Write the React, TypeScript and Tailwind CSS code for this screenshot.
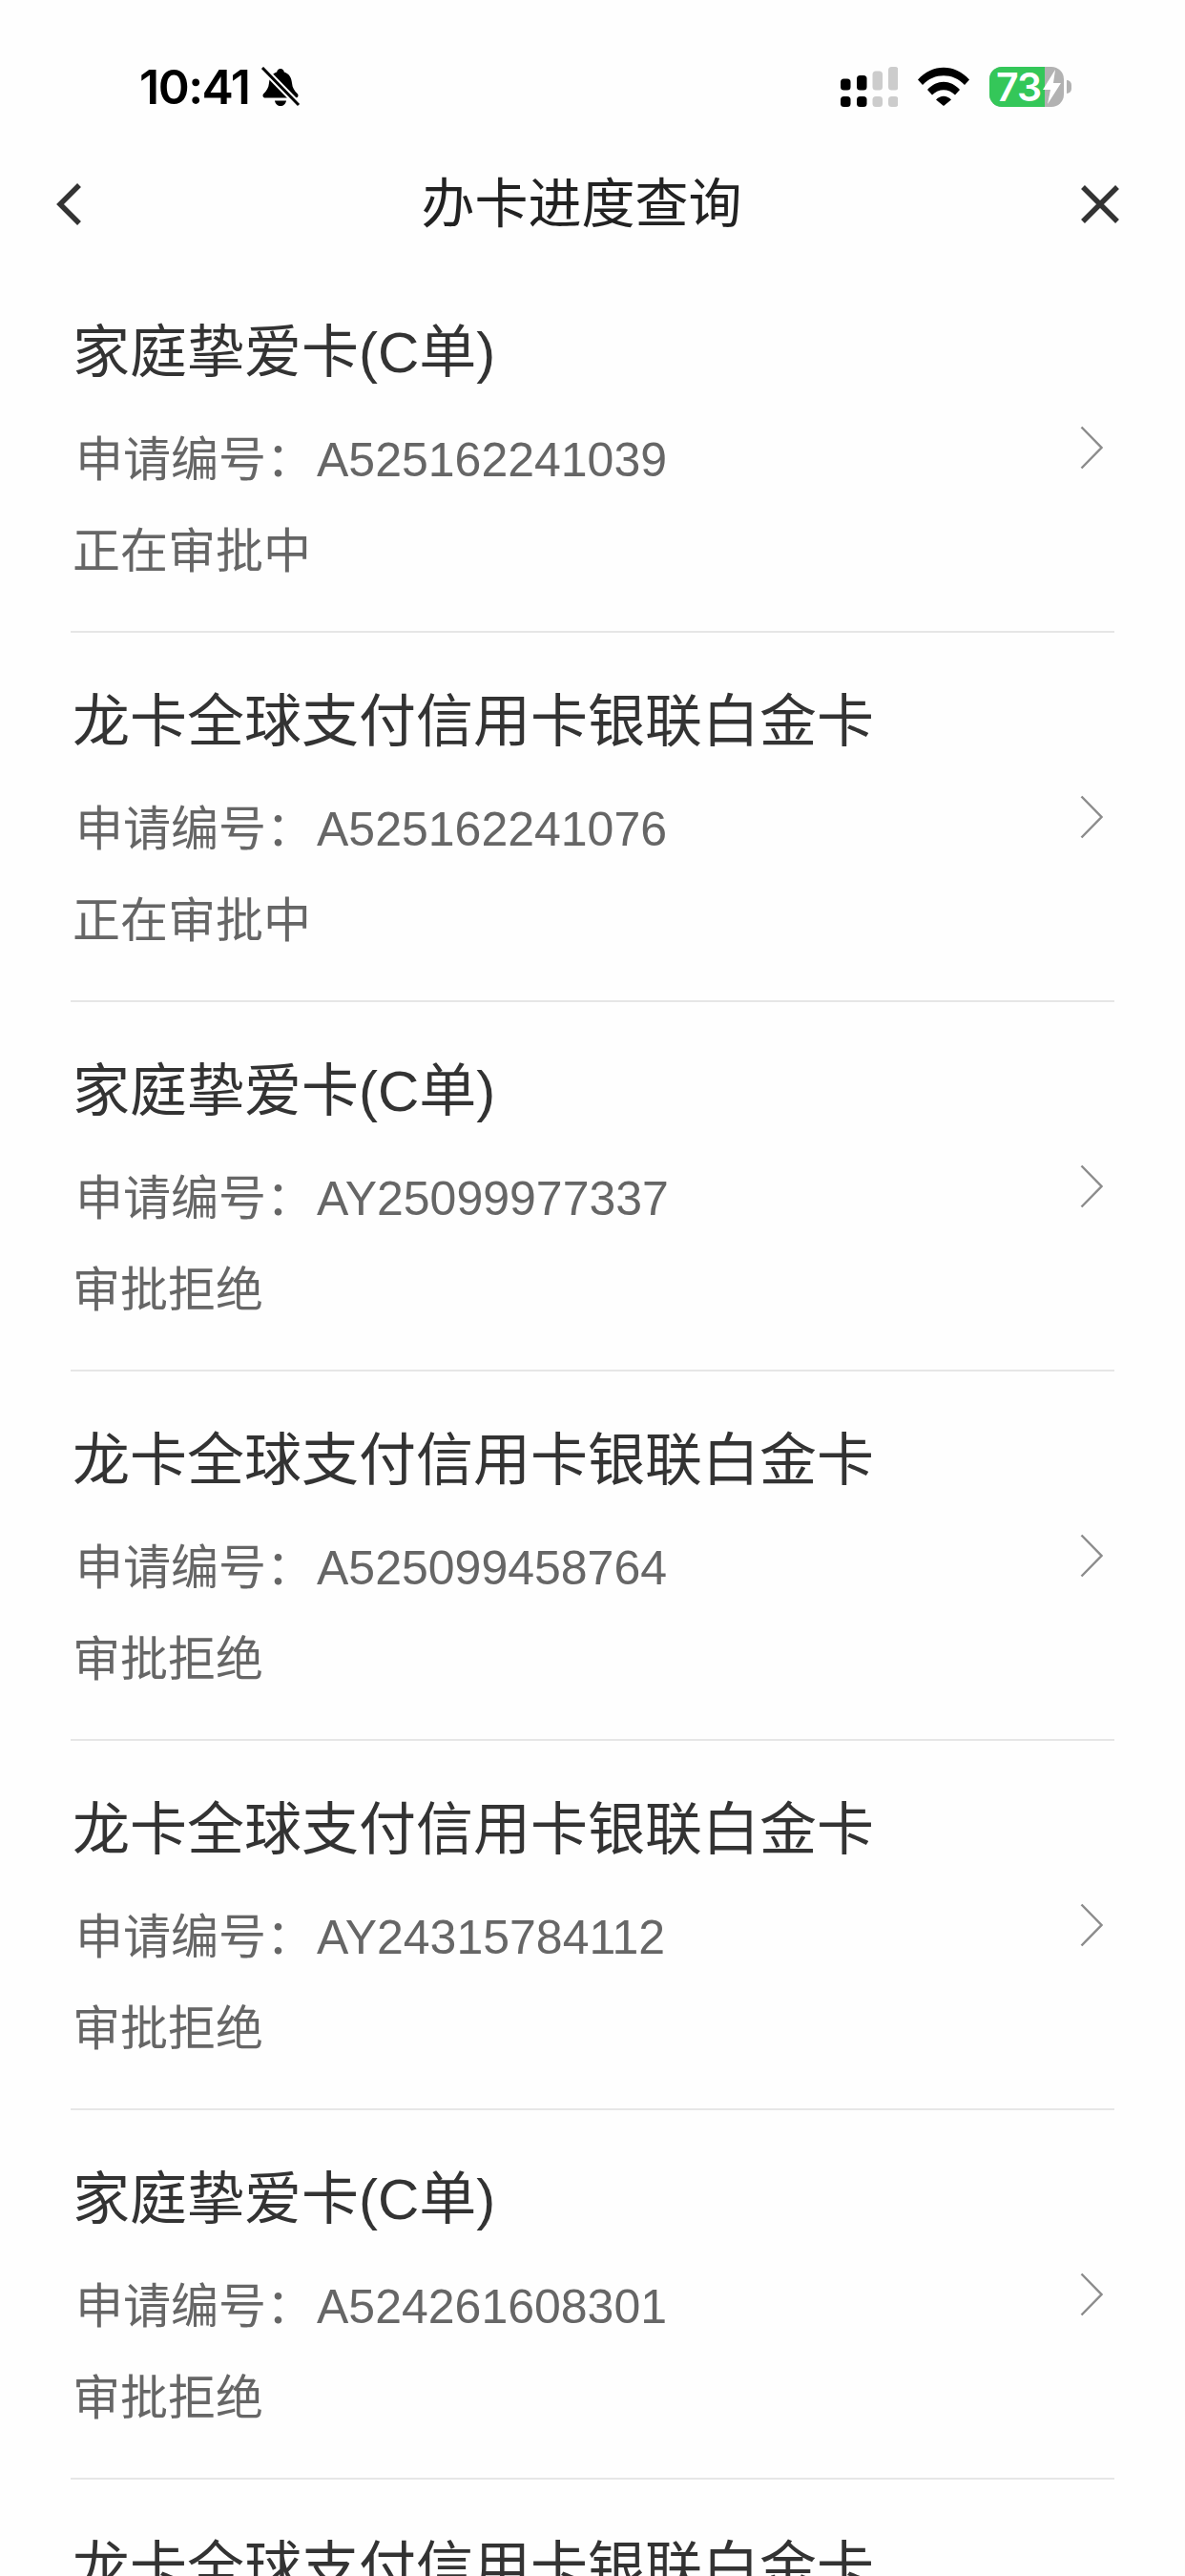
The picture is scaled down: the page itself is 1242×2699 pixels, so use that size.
const font = "font-['Liberation_Sans','Noto_Sans_CJK_SC',sans-serif]";

const rows = [
  { title: "家庭挚爱卡(C单)", no: "A525162241039", status: "正在审批中" },
  { title: "龙卡全球支付信用卡银联白金卡", no: "A525162241076", status: "正在审批中" },
  { title: "家庭挚爱卡(C单)", no: "AY25099977337", status: "审批拒绝" },
  { title: "龙卡全球支付信用卡银联白金卡", no: "A525099458764", status: "审批拒绝" },
  { title: "龙卡全球支付信用卡银联白金卡", no: "AY24315784112", status: "审批拒绝" },
  { title: "家庭挚爱卡(C单)", no: "A524261608301", status: "审批拒绝" },
  { title: "龙卡全球支付信用卡银联白金卡", no: "", status: "" },
];

function Bell() {
  return (
    <svg width="42" height="42" viewBox="0 0 42 42" className="ml-[12px]">
      <path d="M21 2c2 0 3.500 1.500 3.800 3.500C30 7 32.500 11.500 33 17c.4 5 2.500 8 6 11.500 1 1.500.5 4-2 4H5c-2.500 0-3-2.500-2-4 3.500-3.500 5.500-6.500 6-11.500.5-5.500 3-10 8.200-11.500C17.500 3.500 19 2 21 2z" fill="#000" />
      <path d="M15 35.500h12c-.5 3.500-3 5.500-6 5.500s-5.500-2-6-5.500z" fill="#000" />
      <path d="M2 1l38 39" stroke="#fff" strokeWidth="7" />
      <path d="M2 1l38 39" stroke="#000" strokeWidth="3" />
    </svg>
  );
}

function Signal() {
  return (
    <svg width="60" height="42" viewBox="0 0 60 42">
      <rect x="0" y="12.500" width="10.500" height="12" rx="3.500" fill="#000" />
      <rect x="17" y="9" width="10.500" height="15.500" rx="3.500" fill="#000" />
      <rect x="33.500" y="4.500" width="10.500" height="20" rx="3.500" fill="#ccc" />
      <rect x="50" y="0" width="10.500" height="24.500" rx="3.500" fill="#ccc" />
      <rect x="0" y="31" width="10.500" height="11" rx="3.500" fill="#000" />
      <rect x="17" y="31" width="10.500" height="11" rx="3.500" fill="#000" />
      <rect x="33.500" y="31" width="10.500" height="11" rx="3.500" fill="#ccc" />
      <rect x="50" y="31" width="10.500" height="11" rx="3.500" fill="#ccc" />
    </svg>
  );
}

function Wifi() {
  return (
    <svg width="54" height="42" viewBox="0 0 54 42">
      <path d="M0 13.500C15 -3.500 39 -3.500 54 13.500L49 19C37 6 17 6 5 19z" fill="#000" />
      <path d="M10 24C20 13 34 13 44 24L39 29.500C32 22.500 22 22.500 15 29.500z" fill="#000" />
      <path d="M19 34.500C24 29.500 30 29.500 35 34.500L27 41z" fill="#000" />
    </svg>
  );
}

function Battery() {
  return (
    <div className="relative flex items-center">
      <div className="relative flex h-[42px] w-[78px] overflow-hidden rounded-[13px] bg-[#b2b2b2]">
        <div className="h-full w-[58px] bg-[#34c759]" />
        <span className="absolute left-[7px] top-0 font-['Inter',sans-serif] text-[41px] font-semibold leading-[42px] tracking-[-1px] text-white">
          73
        </span>
        <svg width="20" height="36" viewBox="0 0 20 36" className="absolute left-[56px] top-[3px]">
          <path d="M13 0L0 21h8L5 36 19 14h-8z" fill="#fff" />
        </svg>
      </div>
      <div className="ml-[3px] h-[14px] w-[5px] rounded-r-full bg-[#b2b2b2]" />
    </div>
  );
}

function Row({ title, no, status }: { title: string; no: string; status: string }) {
  return (
    <div className="flex h-[387px] shrink-0 items-center justify-between border-b-2 border-[#e6e6e6] pr-[12px]">
      <div className="h-full pl-[2px] pt-[64px]">
        <div className="whitespace-nowrap text-[60px] leading-[60px] text-[#333333]">{title}</div>
        {no && (
          <div className="mt-[52px] flex whitespace-nowrap pl-[3px] text-[50px] leading-[60px] text-[#666666]">
            <span>申请编号：</span>
            <span className="ml-[3px]">{no}</span>
          </div>
        )}
        {status && <div className="mt-[36px] text-[50px] leading-[60px] text-[#666666]">{status}</div>}
      </div>
      <svg width="24" height="46" viewBox="0 0 24 46" fill="none">
        <path d="M1.500 1.500L22.500 23L1.500 44.500" stroke="#8c8c8c" strokeWidth="2.500" />
      </svg>
    </div>
  );
}

export default function App() {
  return (
    <div className={`${font} flex h-[2699px] w-[1242px] flex-col overflow-hidden bg-[#fefefe]`}>
      <div className="flex items-center justify-between pb-[40px] pl-[146px] pr-[119px] pt-[70px]">
        <div className="flex items-center">
          <span className="font-['Inter',sans-serif] text-[50px] font-semibold leading-[42px] tracking-[-1.500px] text-black">
            10:41
          </span>
          <Bell />
        </div>
        <div className="flex items-center gap-[21px]">
          <Signal />
          <Wifi />
          <Battery />
        </div>
      </div>

      <div className="flex h-[124px] shrink-0 items-center justify-between pl-[58px] pr-[69px]">
        <svg width="28" height="44" viewBox="0 0 28 44" fill="none">
          <path d="M25 2L5 22L25 42" stroke="#333333" strokeWidth="5.500" />
        </svg>
        <div className="text-[56px] leading-[60px] text-[#222222]">办卡进度查询</div>
        <svg width="40" height="40" viewBox="0 0 40 40" fill="none">
          <path d="M2 2L38 38M38 2L2 38" stroke="#333333" strokeWidth="5.500" />
        </svg>
      </div>

      <div className="flex flex-col px-[74px]">
        {rows.map((r, i) => (
          <Row key={i} {...r} />
        ))}
      </div>
    </div>
  );
}
